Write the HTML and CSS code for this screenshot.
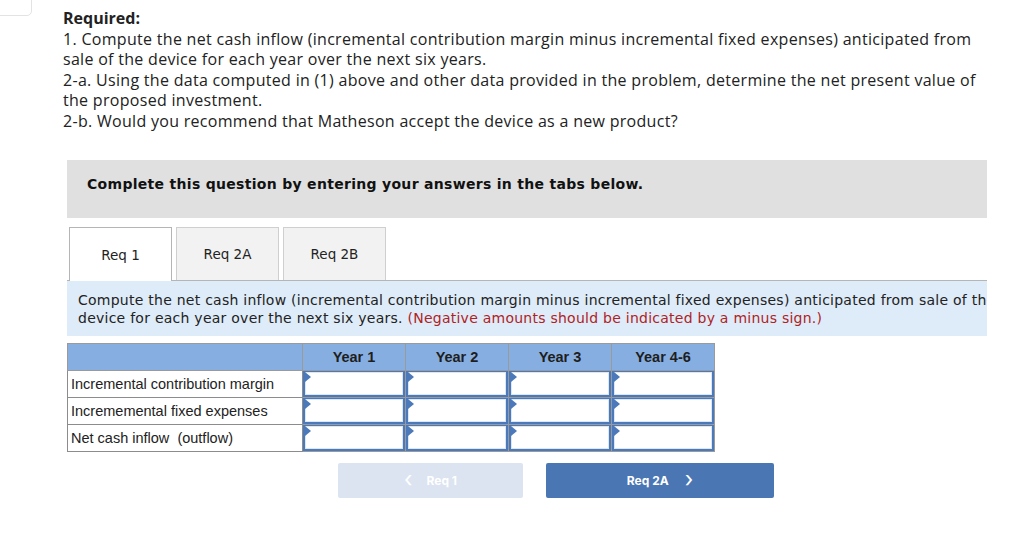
FILE: index.html
```html
<!DOCTYPE html>
<html>
<head>
<meta charset="utf-8">
<link rel="stylesheet" href="styles.css">
</head>
<body>
<div class="corner"></div>
<div class="page">
  <div class="required">
    <div class="req-title">Required:</div>
    <div>1. Compute the net cash inflow (incremental contribution margin minus incremental fixed expenses) anticipated from sale of the device for each year over the next six years.</div>
    <div>2-a. Using the data computed in (1) above and other data provided in the problem, determine the net present value of the proposed investment.</div>
    <div>2-b. Would you recommend that Matheson accept the device as a new product?</div>
  </div>

  <div class="question">
    <div class="banner">Complete this question by entering your answers in the tabs below.</div>
    <div class="tabs">
      <div class="tab active">Req 1</div>
      <div class="tab">Req 2A</div>
      <div class="tab">Req 2B</div>
    </div>
    <div class="panel">
      <div class="line">Compute the net cash inflow (incremental contribution margin minus incremental fixed expenses) anticipated from sale of the</div>
      <div class="line">device for each year over the next six years. <span class="warn">(Negative amounts should be indicated by a minus sign.)</span></div>
    </div>

    <table class="grid">
      <colgroup>
        <col class="c-label"><col class="c-val"><col class="c-val"><col class="c-val"><col class="c-val">
      </colgroup>
      <thead>
        <tr><th></th><th>Year 1</th><th>Year 2</th><th>Year 3</th><th>Year 4-6</th></tr>
      </thead>
      <tbody>
        <tr><td class="label">Incremental contribution margin</td><td class="in"><div class="box"></div></td><td class="in"><div class="box"></div></td><td class="in"><div class="box"></div></td><td class="in"><div class="box"></div></td></tr>
        <tr><td class="label">Incrememental fixed expenses</td><td class="in"><div class="box"></div></td><td class="in"><div class="box"></div></td><td class="in"><div class="box"></div></td><td class="in"><div class="box"></div></td></tr>
        <tr><td class="label">Net cash inflow &nbsp;(outflow)</td><td class="in"><div class="box"></div></td><td class="in"><div class="box"></div></td><td class="in"><div class="box"></div></td><td class="in"><div class="box"></div></td></tr>
      </tbody>
    </table>

    <div class="nav">
      <div class="btn prev"><span class="chev">&lsaquo;</span><span>Req 1</span></div>
      <div class="btn next"><span>Req 2A</span><span class="chev">&rsaquo;</span></div>
    </div>
  </div>
</div>
</body>
</html>
```

FILE: styles.css
```css
html, body {
  margin: 0;
  padding: 0;
  background: #ffffff;
}

.corner {
  position: absolute;
  left: -10px;
  top: -10px;
  width: 40px;
  height: 24px;
  border: 1px solid #e3e3e3;
  border-radius: 0 0 5px 0;
}

.page {
  padding: 8px 0 0 63px;
}

.required {
  font-family: "Open Sans", "Liberation Sans", sans-serif;
  font-size: 16px;
  letter-spacing: 0.3px;
  line-height: 20.5px;
  color: #222222;
  width: 930px;
}

.req-title {
  font-weight: bold;
  letter-spacing: 0;
}

.question {
  margin-top: 29px;
  margin-left: 4px;
  width: 920px;
}

.banner {
  background: #e0e0e0;
  height: 58px;
  box-sizing: border-box;
  padding: 16px 0 0 20px;
  font-family: "DejaVu Sans", Verdana, sans-serif;
  font-weight: bold;
  font-size: 14px;
  letter-spacing: 0.3px;
  color: #111111;
}

.tabs {
  display: flex;
  gap: 4px;
  margin-top: 9px;
  padding-left: 2px;
  border-bottom: 1px solid #b5b5b5;
  height: 53px;
}

.tab {
  width: 103px;
  box-sizing: border-box;
  height: 53px;
  border: 1px solid #cfcfcf;
  border-bottom: none;
  background: #f2f2f2;
  display: flex;
  align-items: center;
  justify-content: center;
  font-family: "DejaVu Sans", Verdana, sans-serif;
  font-size: 13.5px;
  color: #222222;
}

.tab.active {
  background: #ffffff;
  border-color: #b5b5b5;
  height: 54px;
}

.panel {
  background: #deebf8;
  height: 55px;
  box-sizing: border-box;
  padding: 10px 0 0 11px;
  overflow: hidden;
  font-family: "DejaVu Sans", Verdana, sans-serif;
  font-size: 14px;
  letter-spacing: 0.25px;
  line-height: 18px;
  color: #222222;
}

.line {
  white-space: nowrap;
}

.warn {
  color: #b0221f;
}

.grid {
  margin-top: 7px;
  border-collapse: collapse;
  font-family: "Liberation Sans", Arial, sans-serif;
  font-size: 14.5px;
  color: #222222;
}

.c-label { width: 235px; }
.c-val { width: 103px; }

.grid th {
  background: #87aee0;
  border: 1px solid #9a9a9a;
  height: 26px;
  padding: 0;
  font-weight: bold;
  font-size: 14.5px;
  color: #1e1e1e;
  text-align: center;
}

.grid td.label {
  border: 1px solid #8c8c8c;
  height: 26px;
  padding: 0 0 0 3px;
  white-space: nowrap;
}

.grid td.in {
  border: 1px solid #9a9a9a;
  padding: 0;
  height: 26px;
  background: #ffffff;
}

.box {
  position: relative;
  height: 26px;
  box-sizing: border-box;
  border: 2px solid #4b79b9;
  border-top-width: 1px;
  border-left-width: 2px;
  background: #ffffff;
  box-shadow: inset 0 0 0 1px #dce7f5;
}

.box::before {
  content: "";
  position: absolute;
  left: 0;
  top: 0;
  width: 0;
  height: 0;
  border-top: 5px solid transparent;
  border-bottom: 5px solid transparent;
  border-left: 6px solid #4b79b9;
}

.nav {
  display: flex;
  gap: 23px;
  margin-top: 11px;
  padding-left: 271px;
}

.btn {
  height: 35px;
  border-radius: 2px;
  display: flex;
  align-items: center;
  justify-content: center;
  font-family: Inter, "Liberation Sans", sans-serif;
  font-weight: bold;
  font-size: 12px;
  color: #ffffff;
}

.btn .chev {
  font-size: 22px;
  font-weight: normal;
  line-height: 20px;
  margin-top: -3px;
}

.prev {
  width: 185px;
  background: #dbe4f0;
  gap: 14px;
}

.next {
  width: 228px;
  background: #4a76b4;
  gap: 16px;
}
```
